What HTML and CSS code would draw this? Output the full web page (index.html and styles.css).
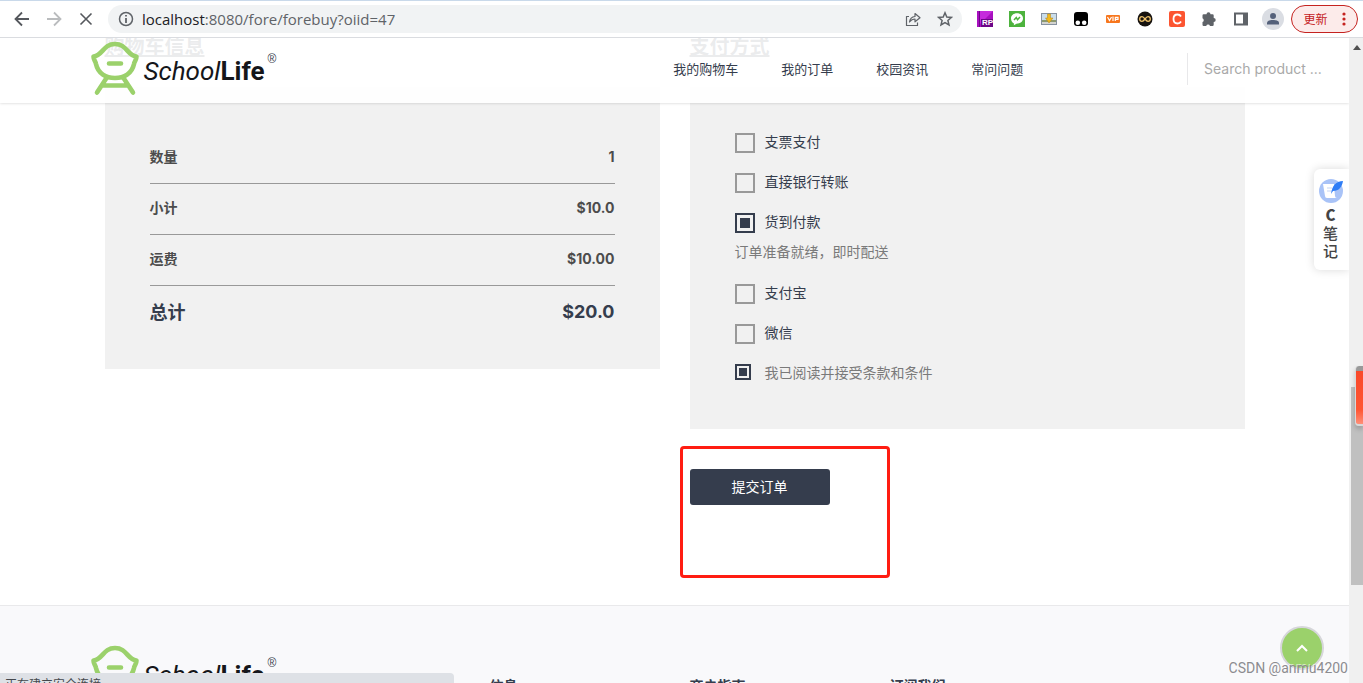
FILE: index.html
```html
<!DOCTYPE html>
<html lang="zh-CN">
<head>
<meta charset="utf-8">
<title>SchoolLife</title>
<link rel="stylesheet" href="styles.css">
</head>
<body>
<svg width="0" height="0" class="defs" aria-hidden="true">
  <symbol id="stool" viewBox="0 0 50 56">
    <g fill="none" stroke="#9bd16b" stroke-width="4.6" stroke-linecap="round" stroke-linejoin="round">
      <path d="M3.500 15.500C13 14.500 13 3 25 3S37 14.500 46.500 15.500C46.500 19 44.500 20 44 23C42 32.500 34 37 25 37S8 32.500 6 23C5.500 20 3.500 19 3.500 15.500Z"/>
      <path d="M19 22.500H31M16.500 37L7 51.500M33.500 37L43 51.500M12 44.500H38"/>
    </g>
  </symbol>
</svg>

<div class="toolbar">
  <button class="tool" aria-label="后退"><svg width="16" height="16" viewBox="0 0 16 16" fill="none" stroke="#55585d" stroke-width="1.800"><path d="M15 8H2M8 1.500L1.500 8L8 14.500"/></svg></button>
  <button class="tool" aria-label="前进"><svg width="16" height="16" viewBox="0 0 16 16" fill="none" stroke="#babcbe" stroke-width="1.800"><path d="M1 8H14M8 1.500L14.500 8L8 14.500"/></svg></button>
  <button class="tool" aria-label="停止"><svg width="16" height="16" viewBox="0 0 16 16" fill="none" stroke="#55585d" stroke-width="1.600"><path d="M2.500 2.500L13.500 13.500M13.500 2.500L2.500 13.500"/></svg></button>
  <div class="omnibox">
    <svg width="16" height="16" viewBox="0 0 16 16" fill="none" stroke="#5f6368" stroke-width="1.500"><circle cx="8" cy="8" r="6.500"/><path d="M8 7V12M8 4V5.600" stroke-width="1.800"/></svg>
    <span class="url"><b>localhost</b>:8080/fore/forebuy?oiid=47</span>
    <button class="tool" aria-label="分享"><svg width="16" height="16" viewBox="0 0 16 16" fill="none" stroke="#5f6368" stroke-width="1.200" stroke-linejoin="round"><path d="M4 5.500H1.500V14.500H12.500V11.500M4.500 11C5 7.500 7 5.800 10 5.500V2.500L15 6.800L10 10.800V8C8 8 6 9 4.500 11Z"/></svg></button>
    <button class="tool" aria-label="收藏"><svg width="16" height="16" viewBox="0 0 16 16" fill="none" stroke="#5f6368" stroke-width="1.500"><path d="M8 1.800L9.800 6L14.400 6.400L10.900 9.400L12 13.900L8 11.500L4 13.900L5.100 9.400L1.600 6.400L6.200 6Z"/></svg></button>
  </div>
  <div class="extensions">
    <button class="tool" aria-label="RP"><svg width="16" height="16" viewBox="0 0 16 16"><path fill="#a80fc0" d="M0 0H16V16H0Z"/><path fill="#c52bdc" d="M3 0H16L3 13Z"/><path fill="#6d0688" d="M2 0H3V16H2ZM4 8H16V16H4Z"/><text x="5" y="14" class="rp">RP</text></svg></button>
    <button class="tool" aria-label="聊天"><svg width="16" height="16" viewBox="0 0 16 16"><path fill="#4db33d" d="M0 0H16V16H0Z"/><path fill="#fff" d="M8 2.300C4.500 2.300 2 4.500 2 7.500S4 12.300 5 12.500L4.800 14.300L7.500 12.700C11.300 12.700 14 10.500 14 7.500S11.500 2.300 8 2.300Z"/><path d="M5 9L7.300 6.500L8.500 8.800L11 6" fill="none" stroke="#4db33d" stroke-width="1.500"/></svg></button>
    <button class="tool" aria-label="图片下载"><svg width="16" height="16" viewBox="0 0 16 16"><path fill="#8792a0" d="M0 2H16V14H0Z"/><path fill="#c9ddeb" d="M1 3H15V9H1Z"/><path fill="#8d9a70" d="M1 9H15V11H1Z"/><path fill="#d4d4d0" d="M1 11H15V13H1Z"/><path fill="#f2b91d" stroke="#b48316" stroke-width=".500" d="M6.500 3H9.500V7H12L8 12L4.500 7H6.500Z"/></svg></button>
    <button class="tool" aria-label="脚本"><svg width="16" height="16" viewBox="0 0 16 16"><rect width="14" height="14" x="1" y="1" rx="3"/><circle cx="4.800" cy="11.800" r="2.300" fill="#fff"/><circle cx="11.200" cy="11.800" r="2.300" fill="#fff"/></svg></button>
    <button class="tool" aria-label="VIP"><svg width="16" height="16" viewBox="0 0 16 16"><rect y="4" x="1" width="14" height="8" rx="1" fill="#f7761d"/><path d="M2.500 6L4.500 9.500L6.500 6M8 5.500V10M10.300 10V6.300H13V8.300H10.300" fill="none" stroke="#fff" stroke-width="1.200"/></svg></button>
    <button class="tool" aria-label="无限"><svg width="16" height="16" viewBox="0 0 16 16"><circle cx="8" cy="8" r="7.500" fill="#17130f"/><path d="M8 8C6.500 6 5.800 5.700 5 5.700A2.300 2.300 0 0 0 5 10.300C5.800 10.300 6.500 10 8 8S10.200 5.700 11 5.700A2.300 2.300 0 0 1 11 10.300C10.200 10.300 9.500 10 8 8Z" fill="none" stroke="#f0c36a" stroke-width="1.300"/></svg></button>
    <button class="tool" aria-label="CSDN"><svg width="16" height="16" viewBox="0 0 16 16"><rect width="16" height="16" rx="2" fill="#fc5531"/><path d="M12 5.500C11.300 4.200 10 3.500 8.500 3.500C6 3.500 4.500 5.400 4.500 8S6 12.500 8.500 12.500C10 12.500 11.300 11.800 12 10.500" fill="none" stroke="#fff" stroke-width="1.800"/></svg></button>
    <button class="tool" aria-label="扩展程序"><svg width="16" height="16" viewBox="0 0 16 16" fill="#5f6368"><path d="M1.500 4.500Q1.500 3.300 2.700 3.300H5.500A2 2 0 0 1 9.500 3.300H11.500Q12.700 3.300 12.700 4.500V7A2 2 0 0 1 12.700 11V13.800Q12.700 15 11.500 15H9A2 2 0 0 0 5.200 15H2.700Q1.500 15 1.500 13.800V11A2 2 0 0 0 1.500 7.300Z"/></svg></button>
    <button class="tool" aria-label="侧边栏"><svg width="16" height="16" viewBox="0 0 16 16"><path d="M2 2.500H14V13.500H2Z" fill="none" stroke="#5f6368" stroke-width="2"/><path d="M10 2H14V14H10Z" fill="#5f6368"/></svg></button>
    <button class="tool" aria-label="用户"><svg width="22" height="22" viewBox="0 0 22 22"><circle cx="11" cy="11" r="11" fill="#dadde3"/><circle cx="11" cy="8" r="3" fill="#54617a"/><path d="M5 16.500V15C5 12.800 8 12 11 12S17 12.800 17 15V16.500Z" fill="#54617a"/></svg></button>
  </div>
  <button class="update">更新 <svg width="4" height="16" viewBox="0 0 4 16" fill="#c5221f"><circle cx="2" cy="3" r="1.600"/><circle cx="2" cy="8" r="1.600"/><circle cx="2" cy="13" r="1.600"/></svg></button>
</div>

<div class="viewport">
  <div class="page">
    <header class="site-header">
      <a class="logo" href="#" aria-label="SchoolLife"><svg class="logo-mark"><use href="#stool"/></svg><span class="logo-text"><i>School</i><b>Life</b></span><sup>®</sup></a>
      <nav class="menu">
        <a href="#">我的购物车</a>
        <a href="#">我的订单</a>
        <a href="#">校园资讯</a>
        <a href="#">常问问题</a>
      </nav>
      <input class="search" type="search" placeholder="Search product ..." aria-label="Search product">
    </header>

    <main class="checkout">
      <section>
        <h2>购物车信息</h2>
        <div class="panel totals">
          <table>
            <tr><th scope="row">数量</th><td>1</td></tr>
            <tr><th scope="row">小计</th><td>$10.0</td></tr>
            <tr><th scope="row">运费</th><td>$10.00</td></tr>
            <tr class="grand"><th scope="row">总计</th><td>$20.0</td></tr>
          </table>
        </div>
      </section>
      <section>
        <h2>支付方式</h2>
        <form class="panel payment">
          <label class="option"><input type="radio" name="pay">支票支付</label>
          <label class="option"><input type="radio" name="pay">直接银行转账</label>
          <div class="option-group">
            <label class="option"><input type="radio" name="pay" checked>货到付款</label>
            <p>订单准备就绪，即时配送</p>
          </div>
          <label class="option"><input type="radio" name="pay">支付宝</label>
          <label class="option"><input type="radio" name="pay">微信</label>
          <label class="option terms"><input type="checkbox" checked>我已阅读并接受条款和条件</label>
        </form>
        <div class="actions"><button class="submit">提交订单</button></div>
      </section>
    </main>

    <footer class="site-footer">
      <div class="footer-grid">
        <a class="logo" href="#" aria-label="SchoolLife"><svg class="logo-mark"><use href="#stool"/></svg><span class="logo-text"><i>School</i><b>Life</b></span><sup>®</sup></a>
        <h3>信息</h3>
        <h3>商户指南</h3>
        <h3>订阅我们</h3>
      </div>
    </footer>

    <aside class="notes">
      <svg width="26" height="26" viewBox="0 0 26 26"><circle cx="13" cy="13" r="12" fill="#a9c3f7"/><path d="M5 6H16V8L17 18Q17 20 19 20H9Q7 20 7 18Z" fill="#fff"/><path d="M9 10H14M9 13H14" stroke="#c5d5f5"/><path d="M13 16C14 8 18 3 25 3C24 9 21 13 15 13Z" fill="#2f7df6"/></svg>
      <span>C</span><span>笔</span><span>记</span>
    </aside>
    <button class="to-top" aria-label="返回顶部"><svg width="14" height="10" viewBox="0 0 14 10" fill="none" stroke="#fff" stroke-width="2"><path d="M2 8L7 3L12 8"/></svg></button>
    <div class="status">正在建立安全连接...</div>
    <div class="watermark">CSDN @anmu4200</div>
  </div>
  <div class="scrollbar">
    <svg width="8" height="5" viewBox="0 0 8 5"><path d="M0 5L4 0L8 5Z" fill="#505050"/></svg>
    <div class="thumb"></div>
    <div class="marker"></div>
  </div>
</div>
</body>
</html>
```
FILE: styles.css
```css
*, *::before, *::after { box-sizing: border-box; }
body {
  margin: 0;
  height: 100vh;
  display: flex;
  flex-direction: column;
  overflow: hidden;
  background: #fff;
  color: #353d4d;
  font: 14px/20px "Noto Sans CJK SC", sans-serif;
}
h2, h3, p { margin: 0; }
a { color: inherit; text-decoration: none; }
button { border: 0; padding: 0; background: none; font: inherit; color: inherit; }
svg { display: block; }
.defs { position: absolute; }

/* Browser toolbar */
.toolbar {
  flex: none;
  height: 38px;
  display: flex;
  align-items: center;
  padding: 0 5px 0 6px;
  border-top: 1px solid #c9d9ea;
  border-bottom: 1px solid #dadce0;
}
.tool { width: 32px; height: 28px; display: grid; place-items: center; flex: none; }
.omnibox {
  flex: 1;
  height: 28px;
  display: flex;
  align-items: center;
  margin: 0 7px 0 6px;
  padding-left: 10px;
  padding-right: 1px;
  border-radius: 14px;
  background: #f1f3f4;
}
.url { flex: 1; margin-left: 8px; color: #5f6368; font: 15px/20px "Open Sans", sans-serif; }
.url b { font-weight: 400; color: #202124; }
.extensions { display: flex; }
.rp { font: bold 8px "Liberation Sans", sans-serif; fill: #fff; }
.update {
  width: 67px;
  height: 28px;
  margin-left: 2px;
  display: flex;
  align-items: center;
  justify-content: center;
  gap: 14px;
  border: 1px solid #c5221f;
  border-radius: 14px;
  background: #fcebea;
  color: #c5221f;
  font-size: 12px;
}

/* Page area */
.viewport { flex: 1; min-height: 0; display: flex; }
.page { flex: 1; position: relative; overflow: hidden; }

.site-header {
  position: absolute;
  inset: 0 0 auto 0;
  z-index: 2;
  height: 65px;
  display: flex;
  align-items: center;
  padding-left: calc((100% - 1170px) / 2);
  padding-bottom: 3px;
  background: rgba(255, 255, 255, 0.9);
  box-shadow: 0 0 3px rgba(0, 0, 0, 0.2);
}
.logo { display: flex; align-items: center; color: #15161a; }
.logo-mark { width: 50px; height: 56px; }
.logo-text { margin: 4px 0 0 4px; font: 26px/32px Roboto, sans-serif; }
.logo sup { align-self: flex-start; margin: 10px 0 0 3px; font: 12px/16px "Liberation Sans", sans-serif; color: #353d4d; }
.menu { display: flex; gap: 43px; margin-left: auto; font-size: 13px; }
.search {
  width: 162px;
  height: 32px;
  margin-left: 13%;
  padding: 0 0 2px 16px;
  border: 0;
  border-left: 1px solid #e8e8ea;
  background: none;
  font: 14px/20px Inter, sans-serif;
}
.search::placeholder { color: #a9a9a9; opacity: 1; }

.checkout {
  width: 1140px;
  max-width: 100%;
  margin: 0 auto;
  padding-bottom: 100px;
  display: grid;
  grid-template-columns: 1fr 1fr;
  gap: 30px;
  align-items: start;
}
h2 { font-size: 20px; line-height: 16px; margin-bottom: 33px; text-decoration: underline; }
.panel { padding: 46px 45px 45px; background: #f1f1f1; }

.totals { padding-bottom: 32px; }
.totals table { width: 100%; border-spacing: 0; color: #4c4c4c; }
.totals th, .totals td { height: 51px; padding: 0 0 2px; border-bottom: 1px solid #999; font-weight: 700; }
.totals th { text-align: left; padding-bottom: 4px; }
.totals td { text-align: right; font-family: Inter, sans-serif; }
.totals .grand th, .totals .grand td { border: 0; padding-bottom: 2px; font-size: 18px; color: #353d4d; }
.totals .grand td { padding-bottom: 0; }

.payment { display: flex; flex-direction: column; gap: 20px; }
.option { display: grid; grid-template-columns: 20px 1fr; column-gap: 10px; min-height: 20px; line-height: 16px; }
.option input {
  appearance: none;
  width: 20px;
  height: 20px;
  margin: 0;
  border: 2px solid #999;
  display: grid;
  place-items: center;
}
.option input:checked { border-color: #353d4d; }
.option input:checked::before { content: ""; width: 10px; height: 10px; background: #353d4d; }
.option-group p { margin: 9px 0 4px; line-height: 18px; color: #7a7a7a; }
.terms { color: #7a7a7a; }
.terms input { width: 16px; height: 16px; }
.terms input:checked::before { width: 8px; height: 8px; }

.actions { position: relative; margin-top: 40px; }
.actions::after {
  content: "";
  position: absolute;
  left: -10px;
  top: -23px;
  width: 210px;
  height: 132px;
  border: 3px solid #ff1d12;
  border-radius: 4px;
  pointer-events: none;
}
.submit { display: block; width: 140px; height: 36px; padding-bottom: 3px; border-radius: 3px; background: #353d4d; color: #fff; }

.site-footer { height: 300px; border-top: 1px solid #e9e9eb; background: #f9f9fb; }
.footer-grid {
  width: 1170px;
  max-width: 100%;
  margin: 0 auto;
  padding-top: 39px;
  display: grid;
  grid-template-columns: 400px 200px 200px 1fr;
}
.footer-grid h3 { margin-top: 30px; font-size: 14px; line-height: 20px; }

/* Floating pieces */
.notes {
  position: absolute;
  right: 0;
  top: 131px;
  width: 35px;
  padding: 9px 2px 10px 0;
  display: flex;
  flex-direction: column;
  align-items: center;
  border-radius: 6px 0 0 6px;
  background: #fff;
  box-shadow: 0 0 10px rgba(0, 0, 0, 0.15);
  color: #444;
  font-size: 15px;
  font-weight: 500;
  line-height: 18px;
}
.notes svg { margin-bottom: 2px; }
.notes span:first-of-type { font-weight: 900; }
.to-top {
  position: absolute;
  right: 25px;
  bottom: 13px;
  width: 44px;
  height: 44px;
  display: grid;
  place-items: center;
  border: 2px solid #d6d6da;
  border-radius: 50%;
  background: #9bd16b;
}
.status {
  position: absolute;
  left: 0;
  bottom: 0;
  width: 454px;
  height: 10px;
  padding: 2px 5px;
  overflow: hidden;
  border-radius: 0 4px 0 0;
  background: #dee1e6;
  color: #45484d;
  font-size: 12px;
  line-height: 18px;
}
.watermark {
  position: absolute;
  right: 1px;
  bottom: 5px;
  color: #8c8c90;
  font: 14px/20px Roboto, sans-serif;
  text-shadow: -1px -1px 0 rgba(255, 255, 255, 0.6);
}
.scrollbar { position: relative; flex: none; width: 14px; background: #f0f0f0; }
.scrollbar svg { margin: 7px 0 0 4px; }
.thumb { position: absolute; left: 2px; right: 0; top: 349px; height: 198px; background: #c0c0c0; }
.marker {
  position: absolute;
  right: 0;
  top: 328px;
  width: 8px;
  height: 60px;
  border: solid #d9d9d9;
  border-width: 0 0 2px 1px;
  border-radius: 4px 0 0 4px;
  background: linear-gradient(#999 5px, #f9492a 5px, #ff5533 75%, #ff8f78);
  box-shadow: 0 3px 5px rgba(0, 0, 0, 0.2);
}
```
